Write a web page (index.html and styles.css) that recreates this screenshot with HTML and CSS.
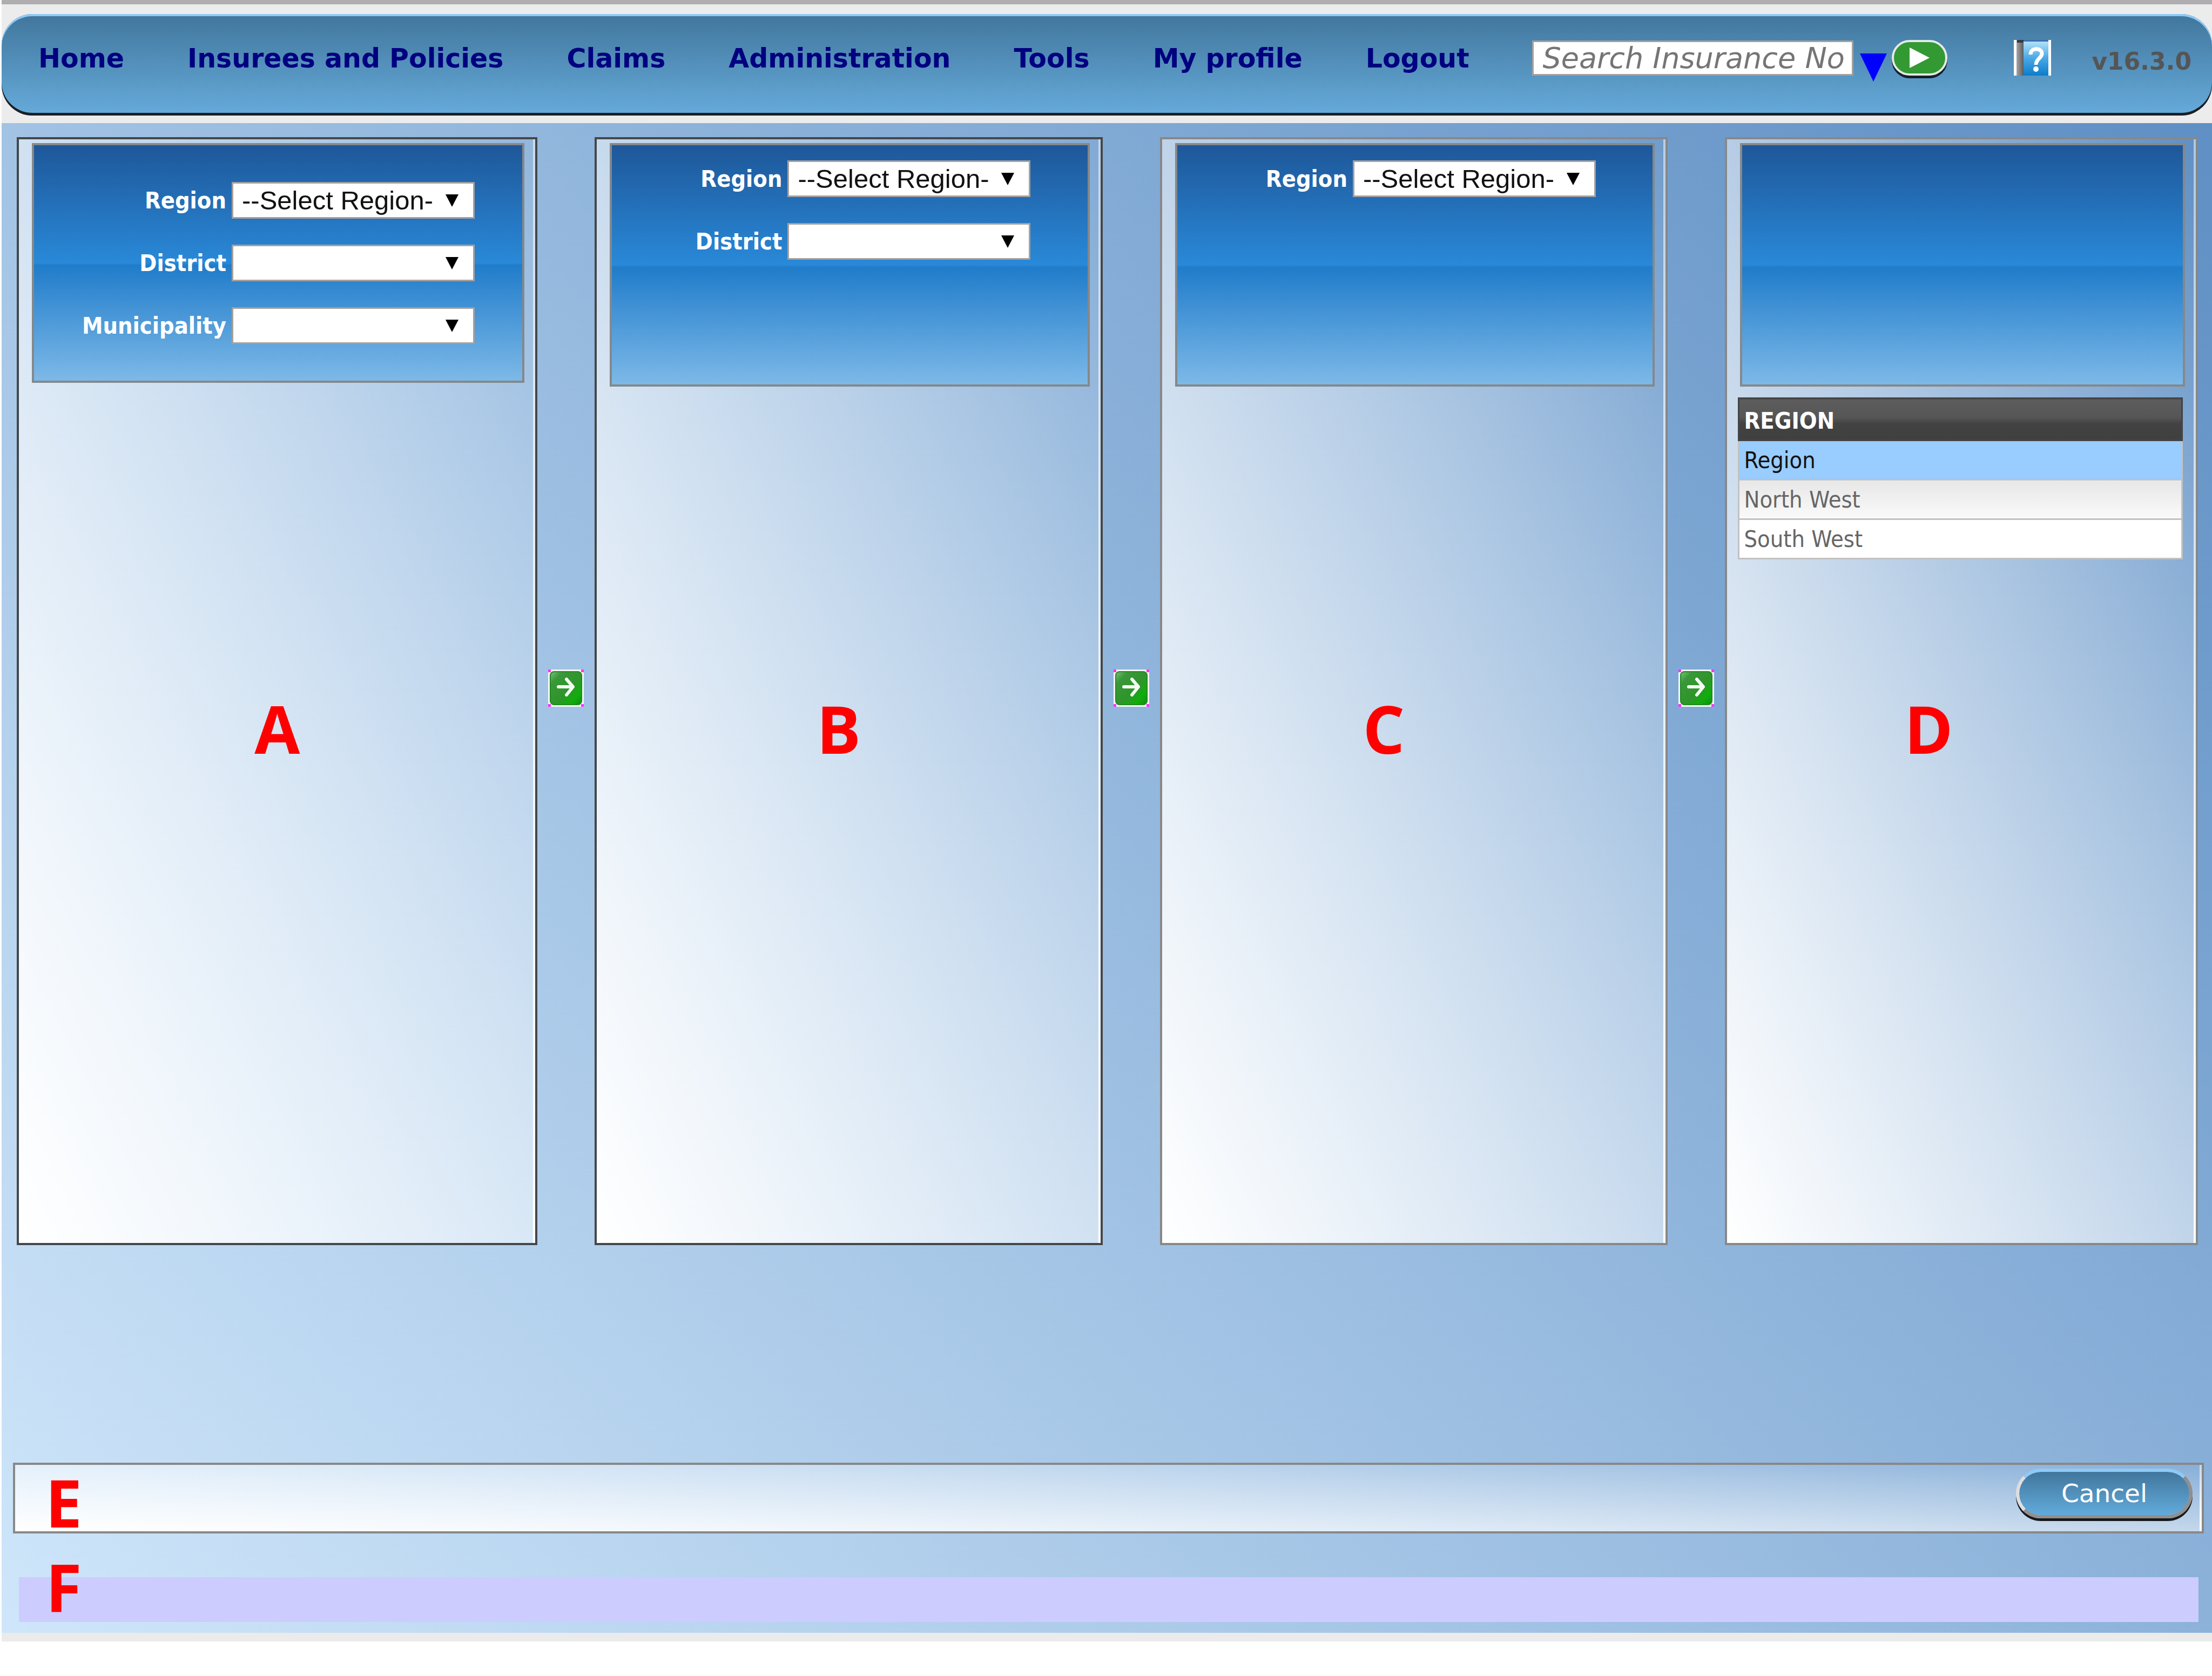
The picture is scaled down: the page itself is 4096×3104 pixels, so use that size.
FILE: index.html
```html
<!DOCTYPE html>
<html lang="en">
<head>
<meta charset="utf-8">
<title>Locations</title>
<link rel="stylesheet" href="styles.css">
</head>
<body>
<svg class="sprite" aria-hidden="true">
  <defs>
    <linearGradient id="green" x1="0" y1="0" x2="1" y2="1">
      <stop offset="0" stop-color="#7fc07f"/><stop offset=".2" stop-color="#3a983a"/><stop offset=".55" stop-color="#2f952b"/><stop offset=".8" stop-color="#0fae0b"/><stop offset="1" stop-color="#118a10"/>
    </linearGradient>
    <linearGradient id="cover" x1="0" y1="0" x2="0" y2="1">
      <stop offset="0" stop-color="#b5e2fb"/><stop offset=".5" stop-color="#48a8e4"/><stop offset="1" stop-color="#0d7ccb"/>
    </linearGradient>
    <linearGradient id="spine" x1="0" y1="0" x2="1" y2="0">
      <stop offset="0" stop-color="#a5a5a8"/><stop offset="1" stop-color="#5c5c60"/>
    </linearGradient>
    <symbol id="move" viewBox="0 0 66 69">
      <rect width="66" height="69" fill="#f2f7f2"/>
      <path fill="#ff33ff" d="M0 0h5v5H0zM61 0h5v5h-5zM0 64h5v5H0zM61 64h5v5h-5z"/>
      <rect x="4" y="4" width="58" height="61" rx="7" fill="url(#green)" stroke="#218a20" stroke-width="2"/>
      <path d="M19 32h26M34 18l12 14-12 15" fill="none" stroke="#f4fbf4" stroke-width="6" stroke-linecap="round" stroke-linejoin="round"/>
    </symbol>
    <symbol id="caret" viewBox="0 0 24 23"><path d="M0 0h24L12 23z"/></symbol>
  </defs>
</svg>

<header class="top">
  <div class="menubar">
    <nav class="menu">
      <a href="#">Home</a>
      <a href="#">Insurees and Policies</a>
      <a href="#">Claims</a>
      <a href="#">Administration</a>
      <a href="#">Tools</a>
      <a href="#">My profile</a>
      <a href="#">Logout</a>
    </nav>
    <form class="search">
      <input class="search-box" type="text" placeholder="Search Insurance No" aria-label="Search Insurance No">
      <svg class="search-pick" viewBox="0 0 50 52"><path fill="#00f" d="M0 0h50L25 52z"/></svg>
      <button class="go" type="button" aria-label="Search"><svg class="go-icon" viewBox="0 0 37 38"><path fill="#fff" d="M0 0l37 19L0 38z"/></svg></button>
    </form>
    <a class="help" href="#" aria-label="Help">
      <svg class="help-icon" viewBox="0 0 69 66">
        <path fill="#fff" d="M0 0h5v66H0zM64 0h5v66h-5z"/>
        <path fill="url(#spine)" d="M5 0h13v66H5z"/>
        <path fill="#333a44" d="M6 0h13v5H6z"/>
        <path fill="url(#cover)" d="M18 2h46v64H18z"/>
        <path fill="#3b6fae" d="M19 0h45v3H19z"/>
        <path d="M31 27c0-14 22-13 21-1-1 8-11 9-11 20" fill="none" stroke="#fff" stroke-width="7"/>
        <circle cx="41" cy="54" r="5" fill="#fff"/>
      </svg>
    </a>
    <span class="version">v16.3.0</span>
  </div>
</header>

<main class="page">
  <div class="columns">
    <section class="panel dark">
      <div class="filter municipal">
        <label for="a-region">Region</label>
        <div class="pick"><select id="a-region"><option>--Select Region-</option></select><svg><use href="#caret"/></svg></div>
        <label for="a-district">District</label>
        <div class="pick"><select id="a-district"><option></option></select><svg><use href="#caret"/></svg></div>
        <label for="a-municipality">Municipality</label>
        <div class="pick"><select id="a-municipality"><option></option></select><svg><use href="#caret"/></svg></div>
      </div>
      <span class="mark mark-a">A</span>
    </section>
    <button class="move" type="button" aria-label="Move"><svg><use href="#move"/></svg></button>
    <section class="panel dark">
      <div class="filter">
        <label for="b-region">Region</label>
        <div class="pick"><select id="b-region"><option>--Select Region-</option></select><svg><use href="#caret"/></svg></div>
        <label for="b-district">District</label>
        <div class="pick"><select id="b-district"><option></option></select><svg><use href="#caret"/></svg></div>
      </div>
      <span class="mark mark-b">B</span>
    </section>
    <button class="move" type="button" aria-label="Move"><svg><use href="#move"/></svg></button>
    <section class="panel">
      <div class="filter">
        <label for="c-region">Region</label>
        <div class="pick"><select id="c-region"><option>--Select Region-</option></select><svg><use href="#caret"/></svg></div>
      </div>
      <span class="mark mark-c">C</span>
    </section>
    <button class="move" type="button" aria-label="Move"><svg><use href="#move"/></svg></button>
    <section class="panel">
      <div class="filter"></div>
      <table class="regions">
        <thead><tr><th>REGION</th></tr></thead>
        <tbody>
          <tr class="selected"><td>Region</td></tr>
          <tr class="shaded"><td>North West</td></tr>
          <tr><td>South West</td></tr>
        </tbody>
      </table>
      <span class="mark mark-d">D</span>
    </section>
  </div>

  <div class="actions">
    <button class="cancel" type="button">Cancel</button>
    <span class="mark mark-e">E</span>
  </div>
  <div class="status"><span class="mark mark-f">F</span></div>
</main>
</body>
</html>
```
FILE: styles.css
```css
* { box-sizing: border-box; }

body {
  margin: 0;
  min-height: 100vh;
  padding: 0 0 64px 3px;
  display: flex;
  flex-direction: column;
  background: #fff;
  font-family: "DejaVu Sans", Verdana, sans-serif;
}

.sprite { position: absolute; width: 0; height: 0; }

/* Menu bar */
.top {
  padding: 18px 0 14px;
  border-top: 8px solid #b0adb0;
  background: #ececec;
}
.menubar {
  height: 188px;
  padding: 0 38px 22px 68px;
  display: flex;
  align-items: center;
  border-radius: 57px;
  background: linear-gradient(#41769c, #66abdb);
  box-shadow: inset 0 4px 0 #8fcaf6, inset 0 -5px 0 #1c1f24;
}
.menu { display: flex; gap: 117px; }
.menu a {
  color: #000080;
  font-size: 49px;
  font-weight: bold;
  line-height: 60px;
  text-decoration: none;
  white-space: nowrap;
}
.search {
  margin: 0 0 4px auto;
  display: flex;
  align-items: center;
}
.search-box {
  width: 595px;
  height: 65px;
  padding: 0 0 0 16px;
  border: 3px solid #a5a19d;
  background: #fff;
  font: italic 54px/60px "DejaVu Sans", Verdana, sans-serif;
}
.search-box::placeholder { color: #757575; opacity: 1; }
.search-pick { width: 50px; height: 52px; margin: 36px 9px 0 12px; }
.go {
  width: 103px;
  height: 66px;
  padding: 0;
  display: grid;
  place-items: center;
  border: 4px solid #e6eae8;
  border-radius: 33px;
  background: #339933;
  box-shadow: 0 5px 0 #15202a;
}
.go-icon { width: 37px; height: 38px; }
.help { margin: 0 75px 4px 123px; }
.help-icon { display: block; width: 69px; height: 66px; }
.version { color: #555; font-size: 44px; font-weight: bold; line-height: 60px; padding-top: 10px; }

/* Page */
.page {
  flex: 1;
  padding: 26px 26px 20px 28px;
  display: flex;
  flex-direction: column;
  border-bottom: 16px solid #ebebeb;
  background: linear-gradient(45deg, #cfe6fa, #5f8fc4);
}
.columns {
  flex: 1;
  display: grid;
  grid-template-columns: 965fr 106px 941fr 106px 941fr 106px 876fr;
}
.panel, .actions {
  position: relative;
  border: 4px solid #888;
  background:
    linear-gradient(to top, #fff, rgba(255, 255, 255, .5)) right / 4px 100% no-repeat,
    linear-gradient(to top right, #fff, rgba(255, 255, 255, 0));
}
.panel { padding: 7px 20px 0 24px; }
.panel.dark { border-color: #444749; }

.filter {
  height: 451px;
  padding-top: 28px;
  display: grid;
  grid-template-columns: 315px 450px;
  grid-auto-rows: 68px;
  gap: 48px 10px;
  align-items: center;
  border: 4px solid #85888a;
  background: linear-gradient(#1e5799 0%, #2989d8 50%, #207cca 51%, #7db9e8 100%);
}
.filter.municipal {
  height: 444px;
  padding-top: 68px;
  grid-template-columns: 356px 450px;
}
.filter label {
  color: #fff;
  font: bold 43px/60px "DejaVu Sans Condensed", Tahoma, sans-serif;
  text-align: right;
}
.pick { position: relative; }
.pick select {
  display: block;
  width: 100%;
  height: 68px;
  padding: 0 16px;
  appearance: none;
  border: 3px solid #a5a09b;
  border-radius: 0;
  background: #fff;
  color: #111;
  font: 49px/60px "Liberation Sans", Arial, sans-serif;
}
.pick svg {
  position: absolute;
  right: 30px;
  top: 23px;
  width: 24px;
  height: 23px;
  pointer-events: none;
}

.move {
  align-self: center;
  justify-self: center;
  padding: 0 0 12px;
  border: 0;
  background: none;
}
.move svg { display: block; width: 66px; height: 69px; }

/* Region list */
.regions {
  width: 100%;
  margin: 20px 0 0 -4px;
  border-collapse: collapse;
  font: 43px/50px "DejaVu Sans Condensed", Tahoma, sans-serif;
  color: #666;
}
.regions th {
  height: 78px;
  padding: 4px 8px 0;
  border: 3px solid #444;
  background: linear-gradient(#5d5d5d, #565656 45%, #424242 60%, #404040);
  color: #fff;
  text-align: left;
}
.regions td {
  height: 73px;
  padding: 0 8px;
  border: 3px solid #c2c2c2;
  background: #fff;
}
.regions .selected td { background: #99ccff; color: #111; }
.regions .shaded td { background: linear-gradient(#e7e7e7, #fafafa); }

/* Lower bars */
.actions {
  height: 131px;
  margin: 403px -11px 0 -7px;
  padding: 7px 17px 0;
  display: flex;
  justify-content: flex-end;
  align-items: flex-start;
}
.cancel {
  width: 327px;
  height: 92px;
  padding: 0;
  border: 6px solid;
  border-color: #8ecaf7 #918e8c #918e8c #dedede;
  border-radius: 46px;
  background: linear-gradient(#41769c, #62abdc) padding-box;
  box-shadow: 0 5px 0 #16191c;
  color: #fff;
  font: 47px/60px "DejaVu Sans", Verdana, sans-serif;
}
.status {
  position: relative;
  height: 83px;
  margin: 81px -1px 0 4px;
  background: #ccccff;
}

/* Callout letters lying over the page */
.mark {
  position: absolute;
  transform: translateX(-50%);
  color: #f00;
  font: bold 122px/122px "Open Sans", Calibri, sans-serif;
}
.mark-a, .mark-b, .mark-c, .mark-d { top: 1030px; }
.mark-a { left: 50%; }
.mark-b { left: 48%; }
.mark-c { left: 44%; }
.mark-d { left: 43%; }
.mark-e { left: 90px; top: 8px; }
.mark-f { left: 83px; top: -43px; }
```
